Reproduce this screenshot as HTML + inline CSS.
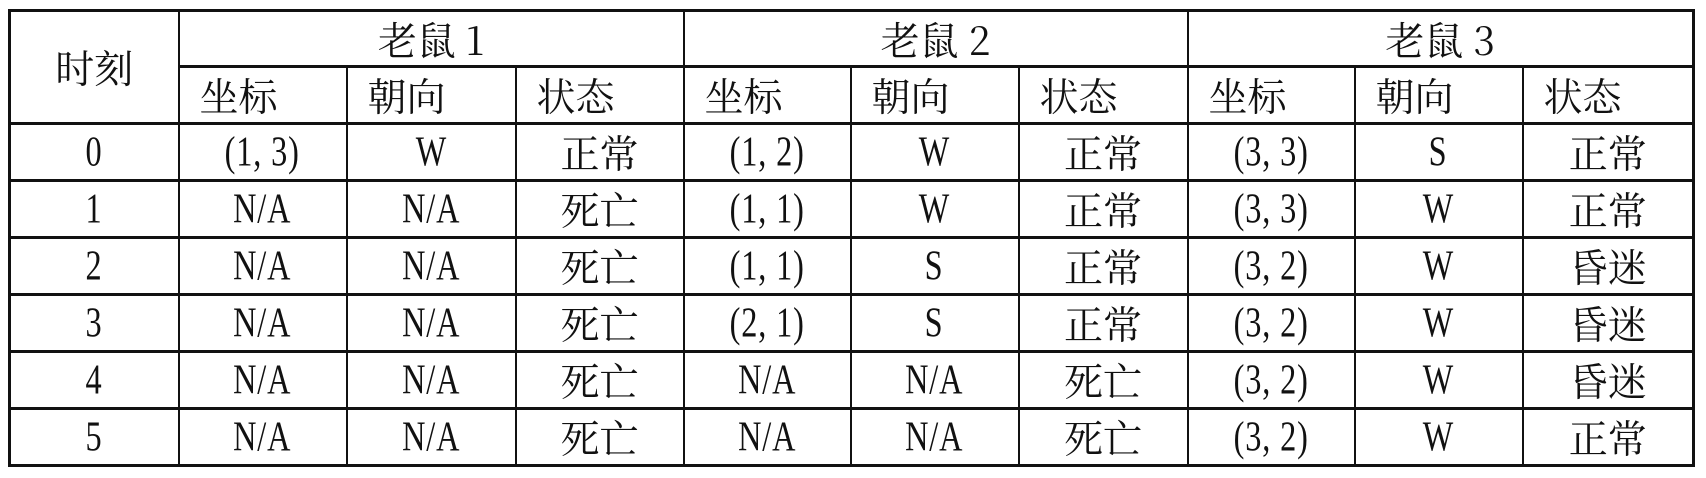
<!DOCTYPE html>
<html><head><meta charset="utf-8"><style>
html,body{margin:0;padding:0;background:#fff;width:1706px;height:478px;overflow:hidden}
table{position:absolute;left:8px;top:9px;border-collapse:collapse;table-layout:fixed;width:1684px;
font-family:"Liberation Serif","Noto Serif CJK SC",serif;font-size:36px;color:#111}
td{border:2px solid #111;border-top:3px solid #111;border-bottom:3px solid #111;text-align:center;padding:0;white-space:nowrap;overflow:hidden;line-height:40px}
tr.h1 td{height:53px}
tr.h2 td{height:54px;text-align:left;padding-left:20px}
tr.d td{height:54px}
td.t{border-left:3px solid #111}
td.r{border-right:3px solid #111}
.m{font-family:"Liberation Serif","Noto Serif CJK SC",serif;font-size:38px;line-height:40px;transform:scale(0.85,1.12);display:inline-block;letter-spacing:1px}
.c{font-family:"Noto Serif CJK SC",serif;font-size:39px;line-height:40px}
</style></head><body>
<table>
<colgroup><col style="width:169px"><col style="width:168px"><col style="width:169px"><col style="width:168px"><col style="width:167px"><col style="width:168px"><col style="width:169px"><col style="width:167px"><col style="width:168px"><col style="width:171px"></colgroup>
<tr class="h1"><td class="t c" rowspan="2">时刻</td><td colspan="3" class="c">老鼠 1</td><td colspan="3" class="c">老鼠 2</td><td colspan="3" class="c r">老鼠 3</td></tr>
<tr class="h2 c"><td>坐标</td><td>朝向</td><td>状态</td><td>坐标</td><td>朝向</td><td>状态</td><td>坐标</td><td>朝向</td><td class="r">状态</td></tr>
<tr class="d"><td class="t"><span class="m">0</span></td><td><span class="m">(1, 3)</span></td><td><span class="m">W</span></td><td class="c">正常</td><td><span class="m">(1, 2)</span></td><td><span class="m">W</span></td><td class="c">正常</td><td><span class="m">(3, 3)</span></td><td><span class="m">S</span></td><td class="c r">正常</td></tr>
<tr class="d"><td class="t"><span class="m">1</span></td><td><span class="m">N/A</span></td><td><span class="m">N/A</span></td><td class="c">死亡</td><td><span class="m">(1, 1)</span></td><td><span class="m">W</span></td><td class="c">正常</td><td><span class="m">(3, 3)</span></td><td><span class="m">W</span></td><td class="c r">正常</td></tr>
<tr class="d"><td class="t"><span class="m">2</span></td><td><span class="m">N/A</span></td><td><span class="m">N/A</span></td><td class="c">死亡</td><td><span class="m">(1, 1)</span></td><td><span class="m">S</span></td><td class="c">正常</td><td><span class="m">(3, 2)</span></td><td><span class="m">W</span></td><td class="c r">昏迷</td></tr>
<tr class="d"><td class="t"><span class="m">3</span></td><td><span class="m">N/A</span></td><td><span class="m">N/A</span></td><td class="c">死亡</td><td><span class="m">(2, 1)</span></td><td><span class="m">S</span></td><td class="c">正常</td><td><span class="m">(3, 2)</span></td><td><span class="m">W</span></td><td class="c r">昏迷</td></tr>
<tr class="d"><td class="t"><span class="m">4</span></td><td><span class="m">N/A</span></td><td><span class="m">N/A</span></td><td class="c">死亡</td><td><span class="m">N/A</span></td><td><span class="m">N/A</span></td><td class="c">死亡</td><td><span class="m">(3, 2)</span></td><td><span class="m">W</span></td><td class="c r">昏迷</td></tr>
<tr class="d"><td class="t"><span class="m">5</span></td><td><span class="m">N/A</span></td><td><span class="m">N/A</span></td><td class="c">死亡</td><td><span class="m">N/A</span></td><td><span class="m">N/A</span></td><td class="c">死亡</td><td><span class="m">(3, 2)</span></td><td><span class="m">W</span></td><td class="c r">正常</td></tr>
</table>
</body></html>
